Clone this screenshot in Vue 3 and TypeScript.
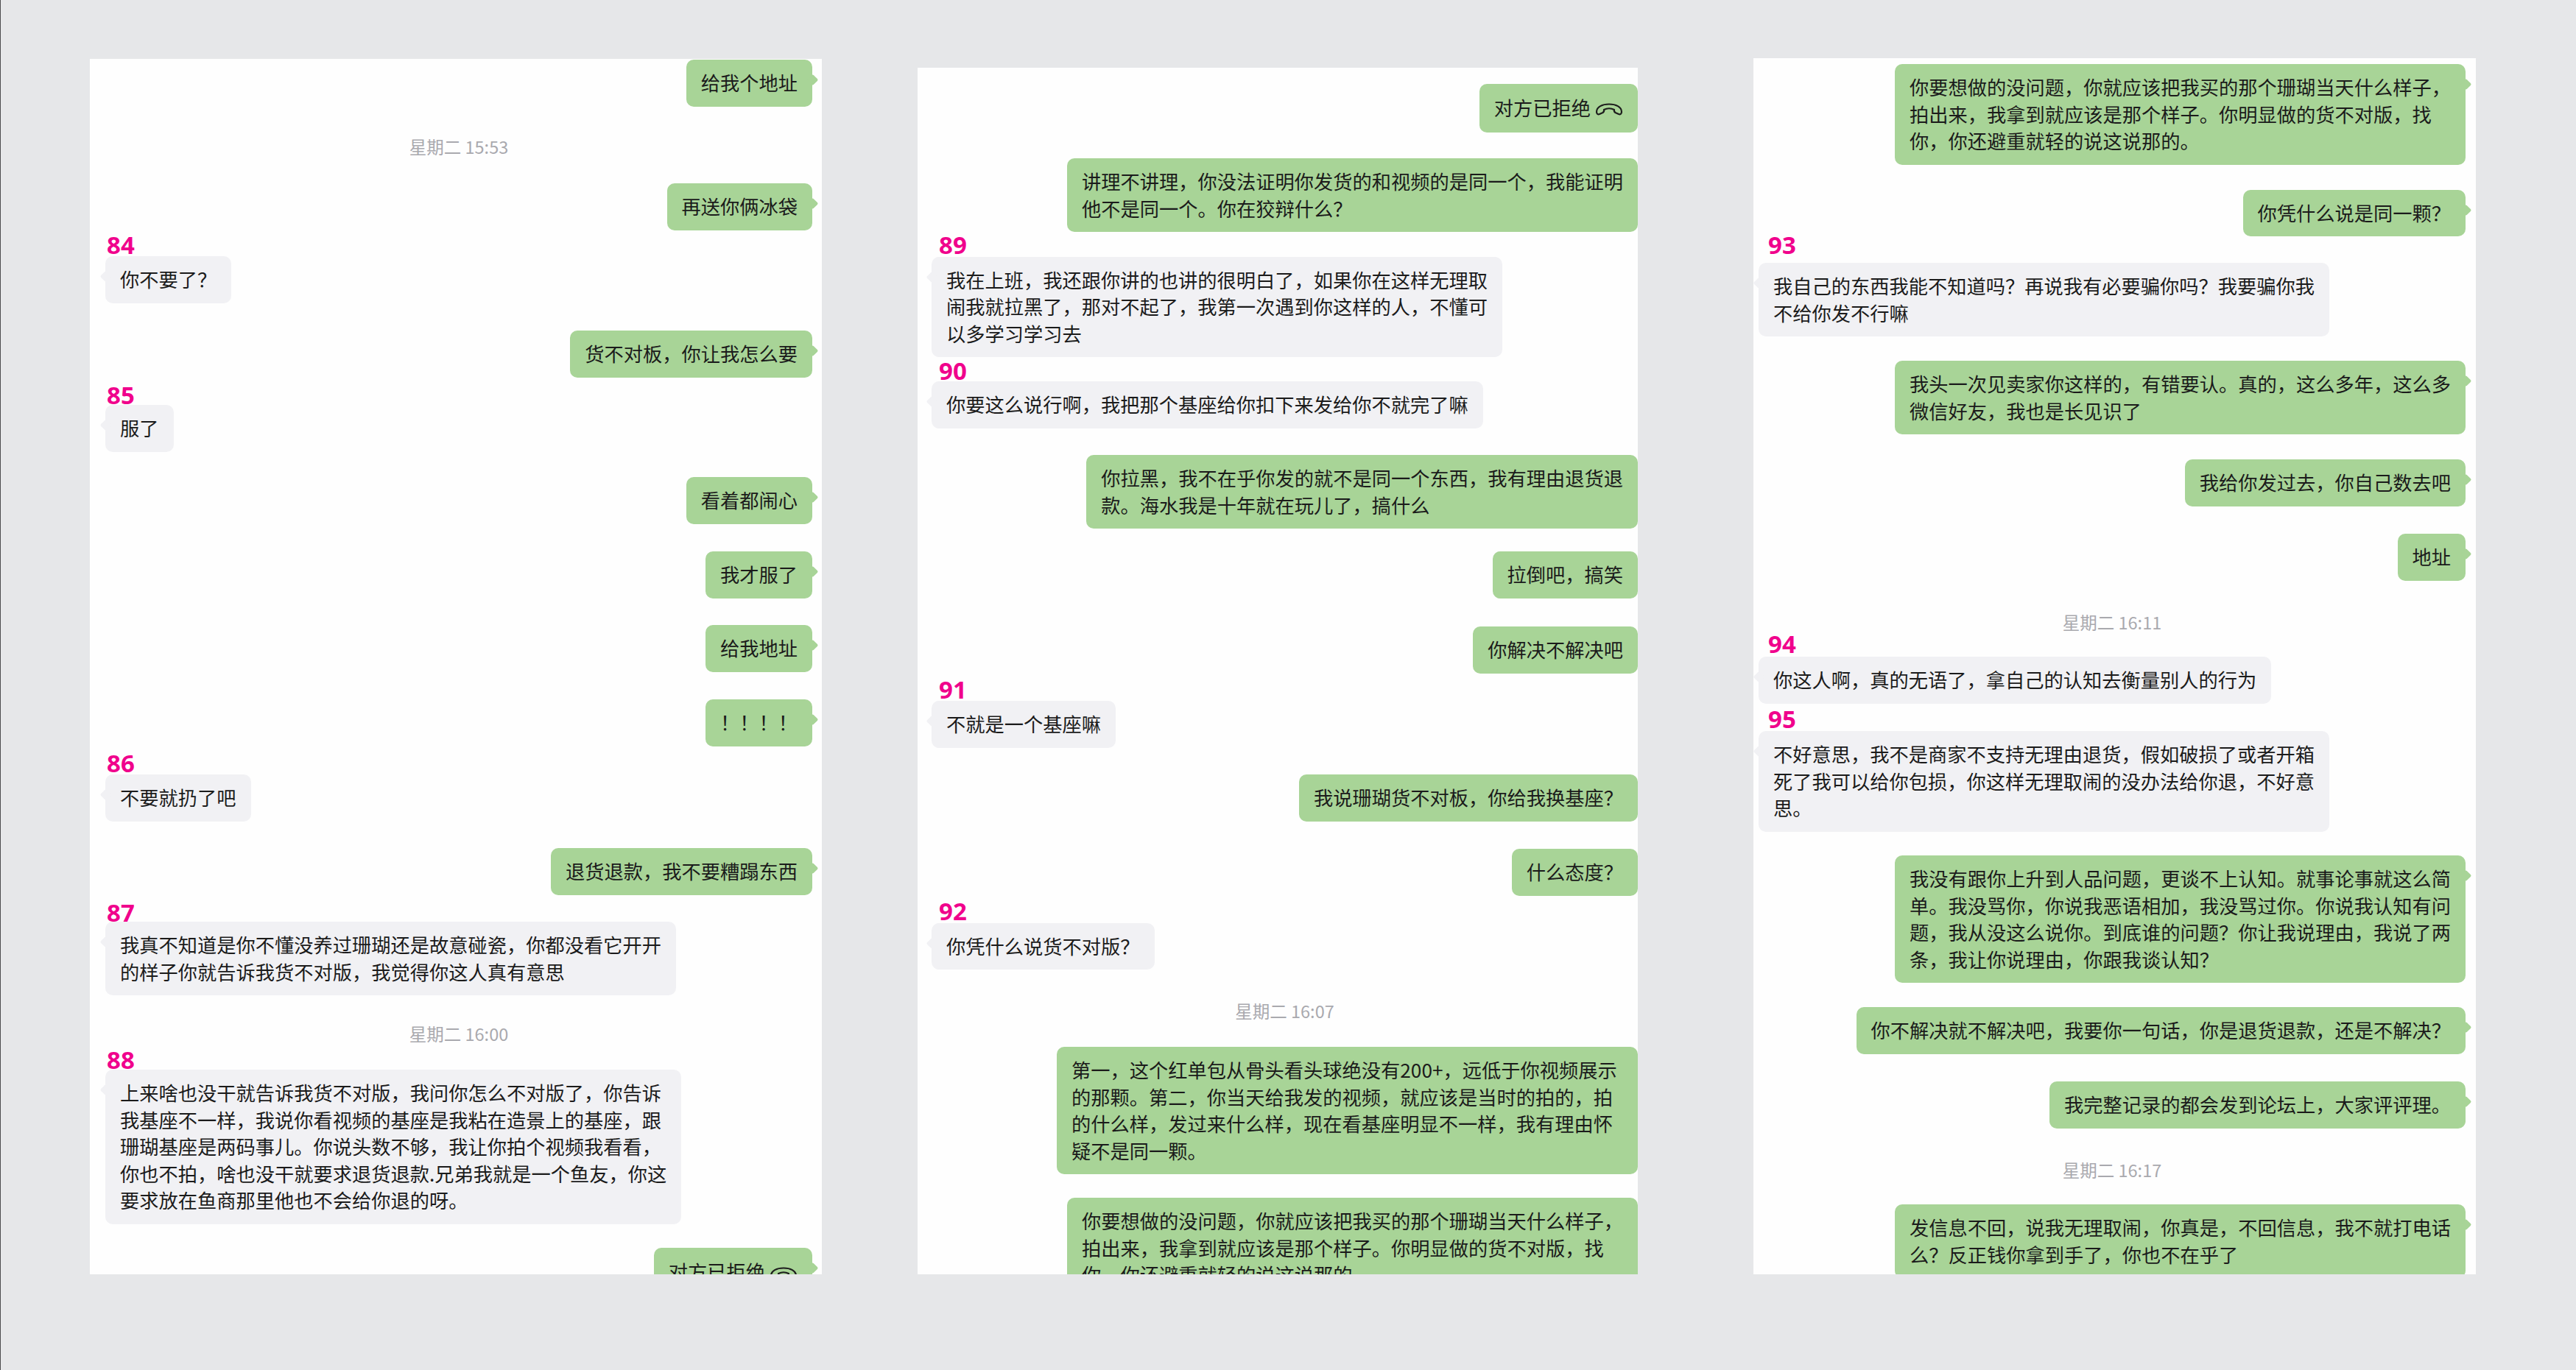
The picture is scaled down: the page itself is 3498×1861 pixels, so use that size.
<script setup lang="ts">
// 三张聊天记录截图并排，gap 是每一行与上一行的间距
type Kind = 'time' | 'label' | 'me' | 'them'

interface Row {
  kind: Kind
  gap: number
  text: string
  call?: boolean
  minWidth?: number
}

interface Panel {
  id: string
  rows: Row[]
}

const time = (gap: number, text: string): Row => ({ kind: 'time', gap, text })
const label = (gap: number, text: string): Row => ({ kind: 'label', gap, text })
const me = (gap: number, text: string, call = false, minWidth?: number): Row => ({ kind: 'me', gap, text, call, minWidth })
const them = (gap: number, text: string): Row => ({ kind: 'them', gap, text })

const panels: Panel[] = [
  {
    id: 'a',
    rows: [
      me(1, '给我个地址'),
      time(38.5, '星期二 15:53'),
      me(34, '再送你俩冰袋'),
      label(7.5, '84'),
      them(2, '你不要了？'),
      me(37.5, '货不对板，你让我怎么要'),
      label(11.5, '85'),
      them(0, '服了'),
      me(34.5, '看着都闹心'),
      me(37.5, '我才服了'),
      me(36.5, '给我地址'),
      me(37.5, '！！！！'),
      label(10.5, '86'),
      them(2, '不要就扔了吧'),
      me(36.5, '退货退款，我不要糟蹋东西'),
      label(11.5, '87'),
      them(-1, '我真不知道是你不懂没养过珊瑚还是故意碰瓷，你都没看它开开\n的样子你就告诉我货不对版，我觉得你这人真有意思'),
      time(36, '星期二 16:00'),
      label(7, '88'),
      them(0, '上来啥也没干就告诉我货不对版，我问你怎么不对版了，你告诉\n我基座不一样，我说你看视频的基座是我粘在造景上的基座，跟\n珊瑚基座是两码事儿。你说头数不够，我让你拍个视频我看看，\n你也不拍，啥也没干就要求退货退款.兄弟我就是一个鱼友，你这\n要求放在鱼商那里他也不会给你退的呀。'),
      me(32.5, '对方已拒绝', true),
    ],
  },
  {
    id: 'b',
    rows: [
      me(22, '对方已拒绝', true),
      me(35, '讲理不讲理，你没法证明你发货的和视频的是同一个，我能证明\n他不是同一个。你在狡辩什么？'),
      label(5, '89'),
      them(2.5, '我在上班，我还跟你讲的也讲的很明白了，如果你在这样无理取\n闹我就拉黑了，那对不起了，我第一次遇到你这样的人，不懂可\n以多学习学习去'),
      label(6, '90'),
      them(1, '你要这么说行啊，我把那个基座给你扣下来发给你不就完了嘛'),
      me(36.5, '你拉黑，我不在乎你发的就不是同一个东西，我有理由退货退\n款。海水我是十年就在玩儿了，搞什么'),
      me(31, '拉倒吧，搞笑'),
      me(38.5, '你解决不解决吧'),
      label(9.5, '91'),
      them(2, '不就是一个基座嘛'),
      me(36.5, '我说珊瑚货不对板，你给我换基座？'),
      me(37.5, '什么态度？'),
      label(8.5, '92'),
      them(2.5, '你凭什么说货不对版？'),
      time(40, '星期二 16:07'),
      me(33, '第一，这个红单包从骨头看头球绝没有200+，远低于你视频展示\n的那颗。第二，你当天给我发的视频，就应该是当时的拍的，拍\n的什么样，发过来什么样，现在看基座明显不一样，我有理由怀\n疑不是同一颗。', false, 789),
      me(32, '你要想做的没问题，你就应该把我买的那个珊瑚当天什么样子，\n拍出来，我拿到就应该是那个样子。你明显做的货不对版，找\n你，你还避重就轻的说这说那的。'),
    ],
  },
  {
    id: 'c',
    rows: [
      me(8, '你要想做的没问题，你就应该把我买的那个珊瑚当天什么样子，\n拍出来，我拿到就应该是那个样子。你明显做的货不对版，找\n你，你还避重就轻的说这说那的。'),
      me(34, '你凭什么说是同一颗？'),
      label(-1, '93'),
      them(11, '我自己的东西我能不知道吗？再说我有必要骗你吗？我要骗你我\n不给你发不行嘛'),
      me(33, '我头一次见卖家你这样的，有错要认。真的，这么多年，这么多\n微信好友，我也是长见识了'),
      me(34, '我给你发过去，你自己数去吧'),
      me(37.5, '地址'),
      time(40.5, '星期二 16:11'),
      label(1, '94'),
      them(4, '你这人啊，真的无语了，拿自己的认知去衡量别人的行为'),
      label(8.5, '95'),
      them(3, '不好意思，我不是商家不支持无理由退货，假如破损了或者开箱\n死了我可以给你包损，你这样无理取闹的没办法给你退，不好意\n思。'),
      me(32.5, '我没有跟你上升到人品问题，更谈不上认知。就事论事就这么简\n单。我没骂你，你说我恶语相加，我没骂过你。你说我认知有问\n题，我从没这么说你。到底谁的问题？你让我说理由，我说了两\n条，我让你说理由，你跟我谈认知？'),
      me(33, '你不解决就不解决吧，我要你一句话，你是退货退款，还是不解决？'),
      me(37.5, '我完整记录的都会发到论坛上，大家评评理。'),
      time(40.5, '星期二 16:17'),
      me(31, '发信息不回，说我无理取闹，你真是，不回信息，我不就打电话\n么？反正钱你拿到手了，你也不在乎了'),
    ],
  },
]
</script>

<template>
  <div class="page">
    <section v-for="panel in panels" :key="panel.id" class="panel" :class="`panel-${panel.id}`">
      <div
        v-for="(row, i) in panel.rows"
        :key="i"
        class="row"
        :class="`row-${row.kind}`"
        :style="{ marginTop: row.gap + 'px' }"
      >
        <template v-if="row.kind === 'me' || row.kind === 'them'">
          <div
            class="bubble"
            :class="[`bubble-${row.kind}`, { 'bubble-call': row.call }]"
            :style="row.minWidth ? { minWidth: row.minWidth + 'px' } : undefined"
          >
            {{ row.text }}<svg
              v-if="row.call"
              class="call-icon"
              viewBox="0 0 38 18"
              fill="none"
              stroke="#1d1d1d"
              stroke-width="2.2"
              stroke-linejoin="round"
            >
              <path d="M2 12C2 5 10 1.500 19 1.500S36 5 36 12C36 14.500 34 16 32 15L27.500 13C26 12 25.500 11 26 9C21 6.500 17 6.500 12 9C12.500 11 12 12 10.500 13L6 15C4 16 2 14.500 2 12Z" />
            </svg>
          </div>
        </template>
        <template v-else>{{ row.text }}</template>
      </div>
    </section>
  </div>
</template>

<style>
html,
body {
  margin: 0;
  background: #e6e7e9;
}
</style>

<style scoped>
.page {
  box-sizing: border-box;
  display: flex;
  align-items: flex-start;
  width: 3498px;
  height: 1861px;
  padding-left: 121px;
  overflow: hidden;
  background: #e6e7e9;
  border-left: 1px solid #4c4c4e;
  font-family: "Noto Sans CJK SC", "Noto Sans", sans-serif;
}

.panel {
  box-sizing: border-box;
  flex: none;
  overflow: hidden;
  background: #fefefe;
}

.panel-a {
  width: 994px;
  height: 1651px;
  margin-top: 80px;
  padding: 0 13px 0 21px;
}

.panel-b {
  width: 978px;
  height: 1639px;
  margin: 92px 0 0 130px;
  padding: 0 0 0 19px;
}

.panel-c {
  width: 981px;
  height: 1652px;
  margin: 79px 0 0 157px;
  padding: 0 14px 0 7px;
}

/* 负的 gap 需要 flow-root，第一行的 margin 才不会穿出面板 */
.panel::before {
  content: "";
  display: table;
}

.row {
  display: flex;
}

.row-me {
  justify-content: flex-end;
}

.row-time {
  justify-content: center;
  height: 32px;
  font-size: 23.5px;
  line-height: 32px;
  color: #a9a9ae;
}

.row-label {
  height: 26px;
  font-family: "Noto Sans", sans-serif;
  font-size: 33px;
  font-weight: 700;
  line-height: 26px;
  color: #f0008c;
  padding-left: 2px;
}

.panel-b .row-label {
  padding-left: 10px;
}

.panel-c .row-label {
  padding-left: 13px;
}

.bubble {
  box-sizing: border-box;
  position: relative;
  padding: 13px 20px 14px;
  border-radius: 10px;
  font-size: 26.25px;
  line-height: 36.5px;
  color: #1b1b1b;
  white-space: pre;
}

.bubble::after {
  content: "";
  position: absolute;
  top: 22px;
  width: 11px;
  height: 11px;
  border-radius: 2px;
  background: inherit;
  transform: rotate(45deg);
}

.bubble-me {
  background: #a8d497;
}

.bubble-me::after {
  right: -5.5px;
}

.bubble-them {
  background: #f1f1f4;
}

.bubble-them::after {
  left: -5.5px;
}

.bubble-call {
  padding-top: 14.25px;
  padding-bottom: 15.25px;
}

.call-icon {
  display: inline-block;
  width: 38px;
  height: 18px;
  margin-left: 6px;
  vertical-align: -1px;
}
</style>
